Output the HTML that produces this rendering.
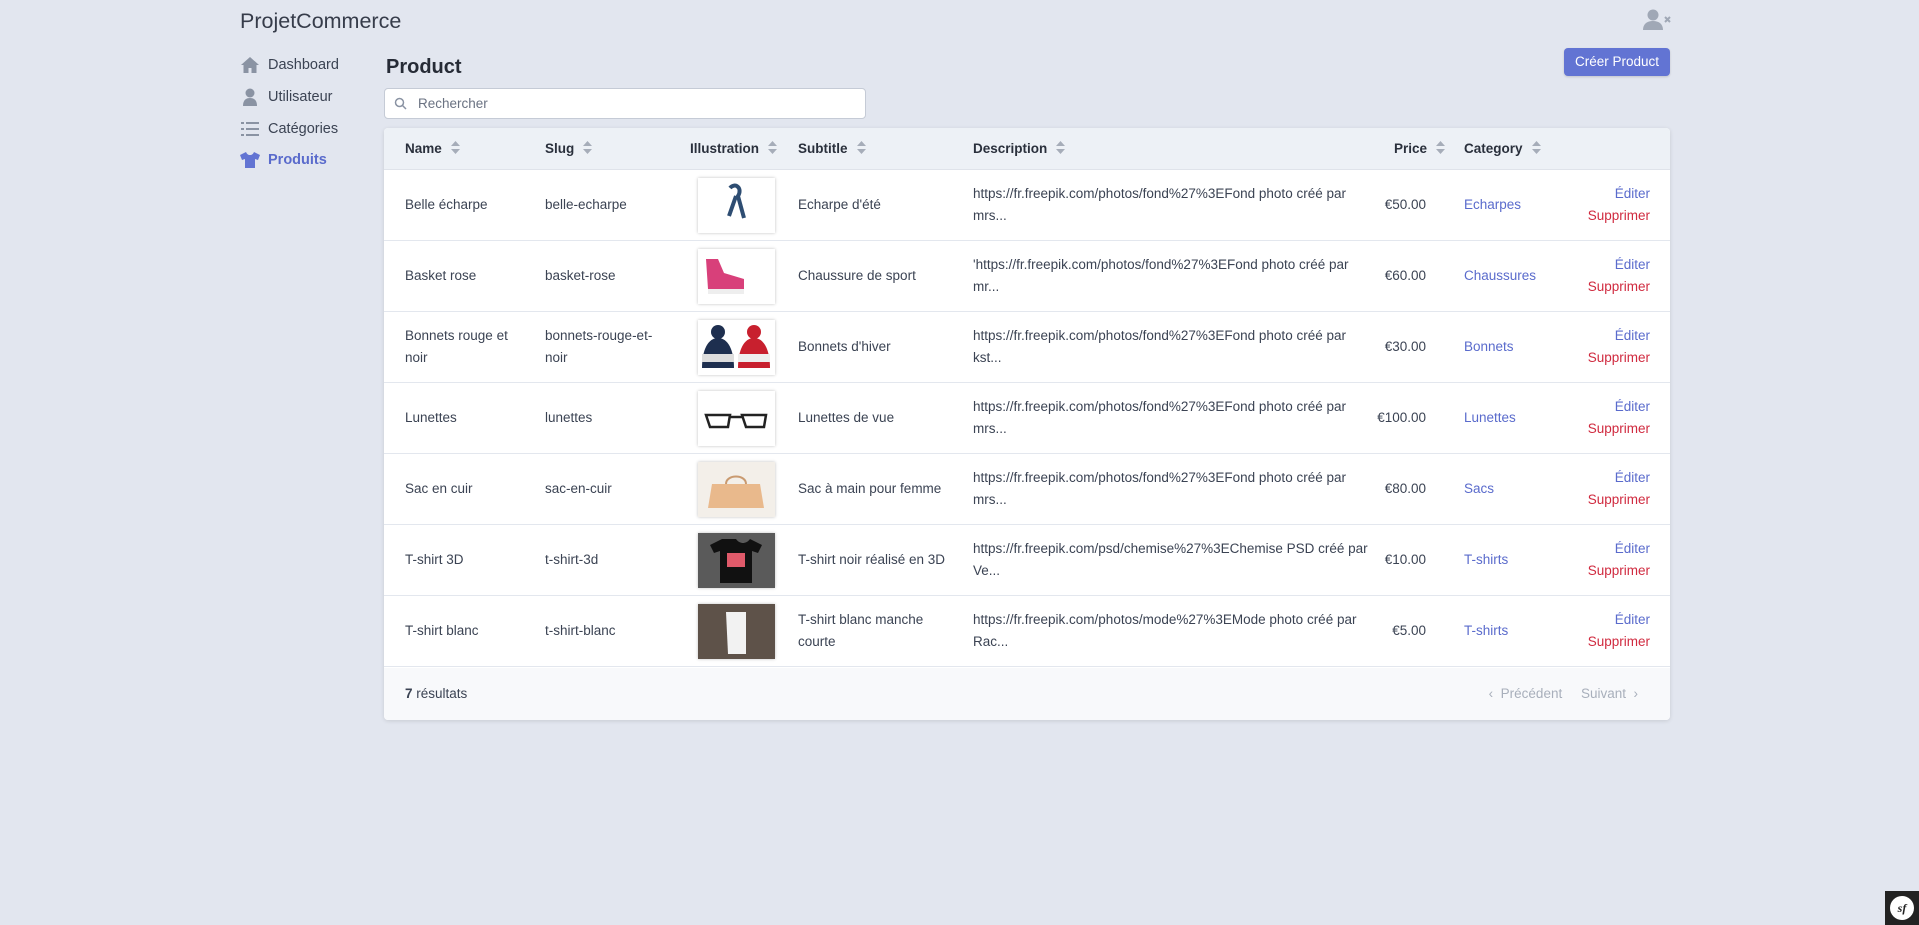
<!DOCTYPE html>
<html><head><meta charset="utf-8"><style>
*{box-sizing:border-box;margin:0;padding:0}
body{width:1919px;height:925px;background:#e2e6ef;font-family:"Liberation Sans",sans-serif;color:#3b4353;position:relative;overflow:hidden;font-size:13.5px}
.abs{position:absolute}
.brand{left:240px;top:9px;font-size:21.5px;color:#363c4a}
.nav{left:240px;font-size:14.5px;color:#3b4353;display:flex;align-items:center}
.nav svg{width:20px;height:20px;margin-right:8px;fill:#8a93a3}
.title{left:386px;top:56px;font-size:20px;font-weight:bold;color:#262b36}
.btn{left:1564px;top:48px;width:106px;height:28px;background:#6274d3;border-radius:4px;color:#fff;font-size:13.5px;text-align:center;line-height:28px;box-shadow:0 1px 2px rgba(0,0,0,.15)}
.search{left:384px;top:88px;width:482px;height:31px;background:#fff;border:1px solid #c5cbd6;border-radius:4px;color:#6a7282;font-size:13.5px;line-height:29px;padding-left:33px}
.table{left:384px;top:128px;width:1286px;height:592px;background:#fff;border-radius:4px;box-shadow:0 1px 4px rgba(0,0,0,.12);overflow:hidden}
.hdr{position:absolute;left:0;top:0;width:100%;height:42px;background:#edf1f6;border-bottom:1px solid #dfe3ea}
.hdr span{position:absolute;top:13px;font-weight:bold;color:#2a303c;font-size:13.5px}
.hdr span svg{margin-left:9px;vertical-align:-1px}
.row{position:absolute;left:0;width:100%;height:71px;border-bottom:1px solid #e3e7ee}
.row div{position:absolute;line-height:22px;color:#3b4353}
.c{top:24px}
.two{top:13px}
.img{left:314px;top:8px;width:77px;height:55px;background:#fff;box-shadow:0 0 3px rgba(0,0,0,.25)}
.price{right:244px;top:24px;text-align:right}
.cat{left:1080px;top:24px;color:#5a6bcc!important}
.act{right:20px;top:13px;text-align:right}
.ed{color:#5a6bcc}.sup{color:#d02a3f}
.foot{position:absolute;left:0;top:540px;width:100%;height:52px;background:#f8f9fb}
</style></head><body>
<svg width="0" height="0" style="position:absolute"><symbol id="s" viewBox="0 0 9 13"><path d="M4.5 0L9 5H0zM4.5 13L9 8H0z" fill="#a6adb9"/></symbol></svg>
<div class="abs brand">ProjetCommerce</div>
<svg class="abs" style="left:1643px;top:8px" width="30" height="24" viewBox="0 0 30 24"><circle cx="10" cy="7" r="5.5" fill="#a0a8b6"/><path d="M0 22c0-6 4-9 10-9s10 3 10 9z" fill="#a0a8b6"/><path d="M22 9l5 5M27 9l-5 5" stroke="#a0a8b6" stroke-width="2"/></svg>
<div class="abs nav" style="top:55px"><svg viewBox="0 0 20 20"><path d="M10 2L1 10h2.5v8h5v-5h3v5h5v-8H19z"/></svg>Dashboard</div>
<div class="abs nav" style="top:87px"><svg viewBox="0 0 20 20"><circle cx="10" cy="6" r="4.5"/><path d="M3 19c0-6 3-8 7-8s7 2 7 8z"/></svg>Utilisateur</div>
<div class="abs nav" style="top:119px"><svg viewBox="0 0 20 20"><rect x="1" y="3" width="3" height="2"/><rect x="6" y="3" width="13" height="2"/><rect x="1" y="9" width="3" height="2"/><rect x="6" y="9" width="13" height="2"/><rect x="1" y="15" width="3" height="2"/><rect x="6" y="15" width="13" height="2"/></svg>Catégories</div>
<div class="abs nav" style="top:150px;color:#5a6bcc;font-weight:bold"><svg viewBox="0 0 20 20" style="fill:#6274d3"><path d="M6 2L0 5l2 5 3-1v9h10V9l3 1 2-5-6-3c-1 2-2 3-4 3S7 4 6 2z"/></svg>Produits</div>
<div class="abs title">Product</div>
<div class="abs btn">Créer Product</div>
<div class="abs search">Rechercher</div>
<svg class="abs" style="left:394px;top:97px" width="13" height="13" viewBox="0 0 13 13"><circle cx="5.5" cy="5.5" r="4" fill="none" stroke="#8a93a3" stroke-width="1.5"/><path d="M8.5 8.5l3.5 3.5" stroke="#8a93a3" stroke-width="1.5"/></svg>
<div class="abs table">
<div class="hdr"><span style="left:21px">Name<svg width="9" height="13"><use href="#s"/></svg></span><span style="left:161px">Slug<svg width="9" height="13"><use href="#s"/></svg></span><span style="left:306px">Illustration<svg width="9" height="13"><use href="#s"/></svg></span><span style="left:414px">Subtitle<svg width="9" height="13"><use href="#s"/></svg></span><span style="left:589px">Description<svg width="9" height="13"><use href="#s"/></svg></span><span style="left:1010px">Price<svg width="9" height="13"><use href="#s"/></svg></span><span style="left:1080px">Category<svg width="9" height="13"><use href="#s"/></svg></span></div>

<div class="row" style="top:42px"><div class="c" style="left:21px">Belle écharpe</div><div class="c" style="left:161px">belle-echarpe</div><div class="img"><svg width="77" height="55"><path d="M32 10c5-6 13 0 8 8l6 22M38 18l-7 20" stroke="#2e4d72" stroke-width="4" fill="none"/></svg></div><div class="c" style="left:414px">Echarpe d'été</div><div class="two" style="left:589px">https://fr.freepik.com/photos/fond%27%3EFond photo créé par<br>mrs...</div><div class="price">€50.00</div><div class="cat">Echarpes</div><div class="act"><span class="ed">Éditer</span><br><span class="sup">Supprimer</span></div></div>

<div class="row" style="top:113px"><div class="c" style="left:21px">Basket rose</div><div class="c" style="left:161px">basket-rose</div><div class="img"><svg width="77" height="55"><path d="M8 10l12 0 6 14 20 6v10H10z" fill="#d8407a"/><rect x="10" y="40" width="36" height="5" fill="#eee"/></svg></div><div class="c" style="left:414px">Chaussure de sport</div><div class="two" style="left:589px">'https://fr.freepik.com/photos/fond%27%3EFond photo créé par<br>mr...</div><div class="price">€60.00</div><div class="cat">Chaussures</div><div class="act"><span class="ed">Éditer</span><br><span class="sup">Supprimer</span></div></div>

<div class="row" style="top:184px"><div class="two" style="left:21px">Bonnets rouge et<br>noir</div><div class="two" style="left:161px">bonnets-rouge-et-<br>noir</div><div class="img"><svg width="77" height="55"><path d="M4 48c0-18 6-30 16-30s16 12 16 30z" fill="#1e2f4f"/><rect x="4" y="34" width="32" height="8" fill="#ddd"/><circle cx="20" cy="12" r="7" fill="#1e2f4f"/><path d="M40 48c0-18 6-30 16-30s16 12 16 30z" fill="#c8202e"/><rect x="40" y="34" width="32" height="8" fill="#eee"/><circle cx="56" cy="12" r="7" fill="#c8202e"/></svg></div><div class="c" style="left:414px">Bonnets d'hiver</div><div class="two" style="left:589px">https://fr.freepik.com/photos/fond%27%3EFond photo créé par<br>kst...</div><div class="price">€30.00</div><div class="cat">Bonnets</div><div class="act"><span class="ed">Éditer</span><br><span class="sup">Supprimer</span></div></div>

<div class="row" style="top:255px"><div class="c" style="left:21px">Lunettes</div><div class="c" style="left:161px">lunettes</div><div class="img"><svg width="77" height="55"><path d="M8 24h24l-2 12h-18zM44 24h24l-2 12h-18zM32 26h12" stroke="#222" stroke-width="2.5" fill="none"/></svg></div><div class="c" style="left:414px">Lunettes de vue</div><div class="two" style="left:589px">https://fr.freepik.com/photos/fond%27%3EFond photo créé par<br>mrs...</div><div class="price">€100.00</div><div class="cat">Lunettes</div><div class="act"><span class="ed">Éditer</span><br><span class="sup">Supprimer</span></div></div>

<div class="row" style="top:326px"><div class="c" style="left:21px">Sac en cuir</div><div class="c" style="left:161px">sac-en-cuir</div><div class="img" style="background:#f3efe9"><svg width="77" height="55"><path d="M14 22h48l4 24H10z" fill="#e9b98c"/><path d="M28 22c0-10 20-10 20 0" stroke="#c99a70" stroke-width="2" fill="none"/></svg></div><div class="c" style="left:414px">Sac à main pour femme</div><div class="two" style="left:589px">https://fr.freepik.com/photos/fond%27%3EFond photo créé par<br>mrs...</div><div class="price">€80.00</div><div class="cat">Sacs</div><div class="act"><span class="ed">Éditer</span><br><span class="sup">Supprimer</span></div></div>

<div class="row" style="top:397px"><div class="c" style="left:21px">T-shirt 3D</div><div class="c" style="left:161px">t-shirt-3d</div><div class="img" style="background:#5a5a5a"><svg width="77" height="55"><path d="M24 6l-12 6 4 8 6-2v32h32V18l6 2 4-8-12-6c-2 3-5 4-7 4s-5-1-7-4z" fill="#111"/><rect x="29" y="20" width="18" height="14" fill="#e05a6a"/></svg></div><div class="c" style="left:414px">T-shirt noir réalisé en 3D</div><div class="two" style="left:589px">https://fr.freepik.com/psd/chemise%27%3EChemise PSD créé par<br>Ve...</div><div class="price">€10.00</div><div class="cat">T-shirts</div><div class="act"><span class="ed">Éditer</span><br><span class="sup">Supprimer</span></div></div>

<div class="row" style="top:468px"><div class="c" style="left:21px">T-shirt blanc</div><div class="c" style="left:161px">t-shirt-blanc</div><div class="img" style="background:#5e5249"><svg width="77" height="55"><path d="M28 8h20v42H30z" fill="#f2f2f2"/></svg></div><div class="two" style="left:414px">T-shirt blanc manche<br>courte</div><div class="two" style="left:589px">https://fr.freepik.com/photos/mode%27%3EMode photo créé par<br>Rac...</div><div class="price">€5.00</div><div class="cat">T-shirts</div><div class="act"><span class="ed">Éditer</span><br><span class="sup">Supprimer</span></div></div>

<div class="foot"><div class="abs" style="left:21px;top:18px"><b>7</b> résultats</div><div class="abs" style="right:32px;top:18px;color:#a8afbb">‹&nbsp; Précédent &nbsp;&nbsp;&nbsp; Suivant &nbsp;›</div></div>
</div>
<div class="abs" style="left:1885px;top:891px;width:34px;height:34px;background:#222;"><div style="margin:5px;width:24px;height:24px;border-radius:50%;background:#fff;color:#222;font:italic bold 12px 'Liberation Serif',serif;text-align:center;line-height:24px">sf</div></div>
</body></html>
